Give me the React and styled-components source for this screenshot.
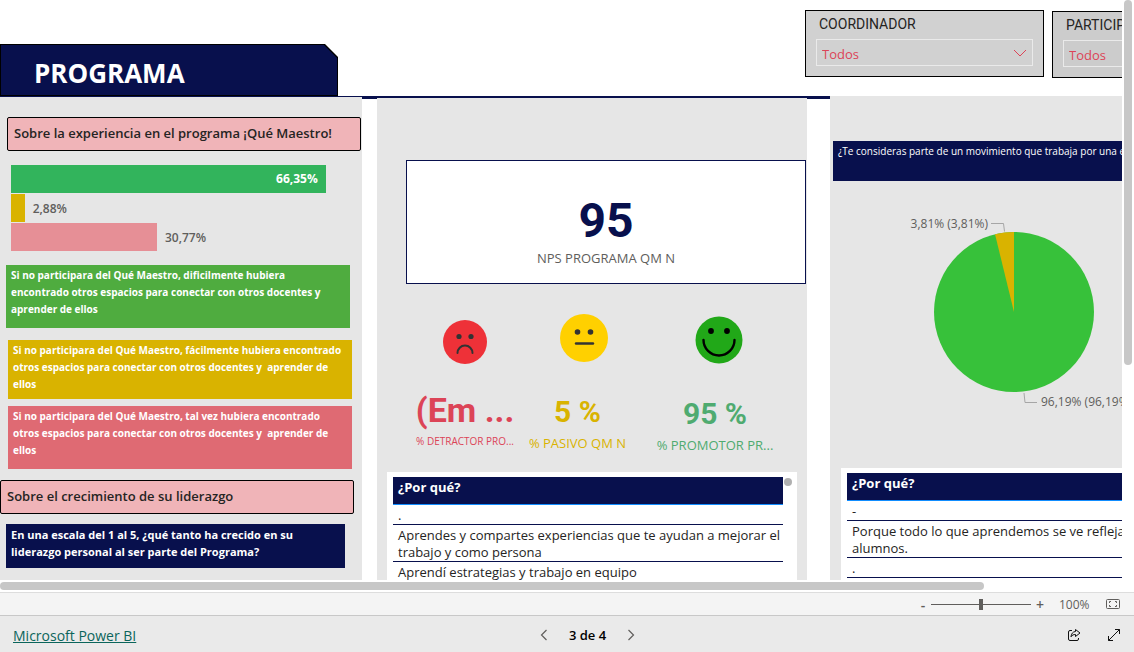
import React from "react";
import styled, { createGlobalStyle } from "styled-components";

const navy = "#08104d";
const gold = "#d9b300";
const ui = `"Open Sans", "Noto Sans", sans-serif`;
const din = `Roboto, "Liberation Sans", sans-serif`;

const Global = createGlobalStyle`
  *, *::before, *::after { box-sizing: border-box; }
  body { margin: 0; background: #fff; color: #252423; font-family: ${ui}; font-size: 12px; }
  button, select, input { font: inherit; color: inherit; margin: 0; }
  h1, h2, p { margin: 0; }
`;

const Page = styled.div`
  display: flex;
  flex-direction: column;
  height: 100vh;
`;

const Viewer = styled.div`
  flex: 1;
  min-height: 0;
  display: grid;
  grid-template-columns: minmax(0, 1fr) 12px;
  grid-template-rows: minmax(0, 1fr) 12px;
`;

const Report = styled.main`
  display: flex;
  flex-direction: column;
  overflow: hidden;
`;

const ScrollLane = styled.div`
  padding: ${(p) => (p.$vertical ? "0 2px" : "2px 0")};
`;

const Thumb = styled.div`
  background: #c7c7c7;
  border-radius: 4px;
  height: ${(p) => (p.$vertical ? "63%" : "8px")};
  width: ${(p) => (p.$vertical ? "8px" : "87.7%")};
`;

const Header = styled.header`
  display: grid;
  grid-template-columns: minmax(0, 338fr) minmax(0, 467fr) minmax(0, 317fr);
  flex: none;
  height: 96px;
`;

const Banner = styled.div`
  grid-column: 1;
  align-self: end;
  height: 52px;
  padding: 1px;
  background: #000;
  clip-path: polygon(0 0, calc(100% - 13px) 0, 100% 13px, 100% 100%, 0 100%);
`;

const BannerFill = styled.div`
  height: 100%;
  display: flex;
  align-items: center;
  padding: 6px 0 0 33px;
  background: ${navy};
  clip-path: polygon(0 0, calc(100% - 13px) 0, 100% 13px, 100% 100%, 0 100%);
`;

const Title = styled.h1`
  font-size: 26px;
  line-height: 32px;
  font-weight: 700;
  color: #fff;
`;

const Slicers = styled.div`
  grid-column: 3;
  display: flex;
  gap: 8px;
  padding-top: 10px;
  overflow: hidden;
`;

const Slicer = styled.div`
  flex: none;
  width: 239px;
  height: 67px;
  margin-top: ${(p) => (p.$lowered ? "1px" : "0")};
  padding: 4px 10px;
  border: 1px solid #000;
  background: ${(p) => (p.$lowered ? "#cccccc" : "#d1d1d1")};
`;

const SlicerLabel = styled.label`
  display: block;
  padding-left: 3px;
  font-family: ${din};
  font-size: 14px;
  line-height: 18px;
  margin-bottom: 6px;
`;

const SelectWrap = styled.div`
  position: relative;
  color: #dc4457;
  svg { position: absolute; right: 6px; top: 10px; pointer-events: none; }
`;

const Select = styled.select`
  appearance: none;
  display: block;
  width: 100%;
  height: 27px;
  padding: 2px 5px 0;
  border: 1px solid #eaeaea;
  border-radius: 0;
  background: transparent;
  font-size: 13px;
`;

const Columns = styled.div`
  flex: 1;
  min-height: 0;
  display: grid;
  grid-template-columns: minmax(0, 362fr) minmax(0, 430fr) minmax(0, 300fr);
  grid-template-rows: minmax(0, 1fr);
  column-gap: 15px;
  background: linear-gradient(${navy} 3px, #fff 3px);
`;

const Panel = styled.section`
  background: #e6e6e6;
  overflow: hidden;
  margin-top: ${(p) => p.$drop || 0}px;
  margin-left: ${(p) => p.$inset || 0}px;
  padding-top: ${(p) => p.$space || 0}px;
`;

const SectionTitle = styled.h2`
  width: 354px;
  max-width: 100%;
  height: 34px;
  margin-left: ${(p) => p.$indent || 0}px;
  padding-left: 6px;
  border: 1px solid #000;
  border-radius: 2px;
  background: #f0b4b8;
  font-size: 13px;
  line-height: 31px;
  font-weight: 600;
  white-space: nowrap;
`;

const Bars = styled.div`
  display: flex;
  flex-direction: column;
  gap: 1px;
  margin: 14px 0 14px 11px;
`;

const BarRow = styled.div`
  display: flex;
  align-items: center;
  height: 28px;
  gap: 8px;
  font-weight: 600;
  color: #605e5c;
`;

const Bar = styled.div`
  height: 100%;
  background: ${(p) => p.$color};
  color: #fff;
  font-weight: 700;
  line-height: 28px;
  text-align: right;
  padding-right: ${(p) => (p.$labelled ? "8px" : "0")};
`;

const Note = styled.p`
  width: ${(p) => p.$width || 344}px;
  height: ${(p) => p.$height}px;
  margin: ${(p) => p.$margin};
  padding: 2px 5px 0;
  background: ${(p) => p.$color};
  color: #fff;
  font-size: ${(p) => (p.$large ? "11px" : "10px")};
  line-height: 17px;
  font-weight: 700;
  white-space: pre;
`;

const ScoreCard = styled.div`
  height: 124px;
  margin: 62px 1px 0 29px;
  padding-top: 34px;
  border: 1px solid ${navy};
  background: #fff;
  text-align: center;
`;

const Score = styled.div`
  font-family: ${din};
  font-weight: 700;
  font-size: 48px;
  line-height: 52px;
  color: ${navy};
`;

const Caption = styled.div`
  font-size: ${(p) => (p.$small ? "10px" : "13px")};
  line-height: 22px;
  color: ${(p) => p.$color || "#605e5c"};
  white-space: nowrap;
`;

const Faces = styled.div`
  display: grid;
  grid-template-columns: 120fr 118fr 151fr;
  height: 52px;
  margin: 28px 13px 0 28px;
  align-items: center;
  justify-items: center;
`;

const Kpis = styled.div`
  display: grid;
  grid-template-columns: 120fr 105fr 170fr;
  height: 86px;
  margin: 22px 7px 0 28px;
  text-align: center;
`;

const Kpi = styled.div`
  padding-top: ${(p) => p.$top}px;
  color: ${(p) => p.$color};
`;

const KpiValue = styled.div`
  font-family: ${din};
  font-weight: 700;
  font-size: ${(p) => (p.$large ? "34px" : "30px")};
  line-height: 40px;
  white-space: nowrap;
`;

const TableCard = styled.div`
  height: 200px;
  display: flex;
  align-items: flex-start;
  gap: 1px;
  margin-left: ${(p) => p.$left}px;
  margin-right: ${(p) => p.$right}px;
  padding: 5px 5px 0 6px;
  background: #fff;
`;

const Table = styled.table`
  flex: 1;
  border-collapse: separate;
  border-spacing: 0;
  font-size: 13px;
  line-height: 17px;
`;

const HeadCell = styled.th`
  height: 28px;
  padding: 2px 5px 0;
  background: ${navy};
  border-bottom: 1px solid #118dff;
  color: #fff;
  text-align: left;
  vertical-align: top;
  font-weight: 700;
`;

const Cell = styled.td`
  padding: 2px 0 0 5px;
  border-bottom: 1px solid ${navy};
  white-space: pre;
`;

const TableDot = styled.div`
  flex: none;
  width: 8px;
  height: 8px;
  margin-top: 1px;
  border-radius: 4px;
  background: #b0b0b0;
`;

const Question = styled.p`
  height: 40px;
  margin: 45px 0 0 3px;
  padding: 1px 5px;
  background: ${navy};
  color: #fff;
  font-size: 10px;
  line-height: 18px;
  white-space: nowrap;
  overflow: hidden;
`;

const Pie = styled.svg`
  display: block;
  font-family: ${ui};
  font-size: 12px;
  fill: #605e5c;
`;

const ZoomBar = styled.div`
  flex: none;
  display: flex;
  align-items: center;
  justify-content: flex-end;
  height: 24px;
  padding-right: 13px;
  border-top: 1px solid #dddddd;
  border-bottom: 1px solid #c8c8c8;
  background: #f4f4f4;
  color: #605e5c;
`;

const IconButton = styled.button`
  display: flex;
  align-items: center;
  justify-content: center;
  width: ${(p) => p.$width || 16}px;
  height: 20px;
  padding: 0;
  border: 0;
  background: none;
  font-size: 14px;
  font-weight: 600;
  color: ${(p) => p.$color || "#605e5c"};
`;

const ZoomRange = styled.input`
  appearance: none;
  width: 100px;
  height: 12px;
  background: linear-gradient(#605e5c, #605e5c) center / 100% 1px no-repeat;
  &::-webkit-slider-thumb {
    appearance: none;
    width: 4px;
    height: 11px;
    background: #605e5c;
  }
`;

const ZoomValue = styled.span`
  width: 28px;
  margin: 0 18px 0 10px;
  font-size: 12px;
`;

const Footer = styled.footer`
  flex: none;
  display: grid;
  grid-template-columns: 1fr auto 1fr;
  align-items: center;
  height: 36px;
  padding: 2px 12px 0 13px;
  background: #eaeaea;
`;

const BrandLink = styled.a`
  justify-self: start;
  font-size: 14px;
  color: #0b655b;
`;

const Pager = styled.nav`
  display: flex;
  align-items: center;
  gap: 17px;
  margin-left: 40px;
  font-size: 13px;
  font-weight: 600;
  color: #000;
`;

const Actions = styled.div`
  display: flex;
  justify-content: flex-end;
  gap: 24px;
`;

function Field({ id, label, lowered }) {
  return (
    <Slicer $lowered={lowered}>
      <SlicerLabel htmlFor={id}>{label}</SlicerLabel>
      <SelectWrap>
        <Select id={id}>
          <option>Todos</option>
        </Select>
        <svg width="14" height="9" viewBox="0 0 14 9" fill="none" stroke="currentColor">
          <path d="M1 1l6 6 6-6" />
        </svg>
      </SelectWrap>
    </Slicer>
  );
}

const ratios = [
  { value: 66.35, label: "66,35%", color: "#32b45c", inside: true },
  { value: 2.88, label: "2,88%", color: gold },
  { value: 30.77, label: "30,77%", color: "#e68f96" },
];

function Ratios() {
  return (
    <Bars>
      {ratios.map((r) => (
        <BarRow key={r.label}>
          <Bar $color={r.color} $labelled={r.inside} style={{ width: `${(r.value / 74) * 100}%` }}>
            {r.inside && r.label}
          </Bar>
          {!r.inside && r.label}
        </BarRow>
      ))}
    </Bars>
  );
}

function Reasons({ rows, left, right, dot }) {
  return (
    <TableCard $left={left} $right={right}>
      <Table>
        <thead>
          <tr><HeadCell scope="col">¿Por qué?</HeadCell></tr>
        </thead>
        <tbody>
          {rows.map((row) => (
            <tr key={row}><Cell>{row}</Cell></tr>
          ))}
        </tbody>
      </Table>
      {dot && <TableDot />}
    </TableCard>
  );
}

export default function App() {
  return (
    <Page>
      <Global />
      <Viewer>
        <Report>
          <Header>
            <Banner><BannerFill><Title>PROGRAMA</Title></BannerFill></Banner>
            <Slicers>
              <Field id="coordinador" label="COORDINADOR" />
              <Field id="participante" label="PARTICIPANTE" lowered />
            </Slicers>
          </Header>
          <Columns>
            <Panel $drop={1} $space={20}>
              <SectionTitle $indent={7}>Sobre la experiencia en el programa ¡Qué Maestro!</SectionTitle>
              <Ratios />
              <Note $color="#4fac3f" $height={63} $margin="0 0 12px 6px">
                {"Si no participara del Qué Maestro, dificilmente hubiera\nencontrado otros espacios para conectar con otros docentes y\naprender de ellos"}
              </Note>
              <Note $color={gold} $height={59} $margin="0 0 7px 8px">
                {"Si no participara del Qué Maestro, fácilmente hubiera encontrado\notros espacios para conectar con otros docentes y  aprender de\nellos"}
              </Note>
              <Note $color="#df6a73" $height={63} $margin="0 0 11px 8px">
                {"Si no participara del Qué Maestro, tal vez hubiera encontrado\notros espacios para conectar con otros docentes y  aprender de\nellos"}
              </Note>
              <SectionTitle>Sobre el crecimiento de su liderazgo</SectionTitle>
              <Note $large $color={navy} $width={339} $height={44} $margin="10px 0 0 6px">
                {"En una escala del 1 al 5, ¿qué tanto ha crecido en su\nliderazgo personal al ser parte del Programa?"}
              </Note>
            </Panel>

            <Panel $drop={2}>
              <ScoreCard>
                <Score>95</Score>
                <Caption>NPS PROGRAMA QM N</Caption>
              </ScoreCard>
              <Faces>
                <svg width="44" height="52" viewBox="0 0 44 52">
                  <circle cx="22" cy="30" r="22" fill="#ee3138" />
                  <circle cx="16" cy="24.500" r="2.600" fill="#333" />
                  <circle cx="28" cy="24.500" r="2.600" fill="#333" />
                  <path d="M14.500 41a7.500 7.500 0 0 1 15 0" fill="none" stroke="#333" strokeWidth="2" strokeLinecap="round" />
                </svg>
                <svg width="48" height="52" viewBox="0 0 48 52">
                  <circle cx="24" cy="26" r="24" fill="#ffd000" />
                  <circle cx="17.500" cy="20" r="2.800" fill="#333" />
                  <circle cx="30.500" cy="20" r="2.800" fill="#333" />
                  <path d="M16 31.500h17" stroke="#333" strokeWidth="2.400" strokeLinecap="round" />
                </svg>
                <svg width="48" height="52" viewBox="0 0 48 52">
                  <circle cx="24" cy="28" r="23.500" fill="#21a818" />
                  <circle cx="16" cy="19" r="2.900" fill="#000" />
                  <circle cx="32" cy="19" r="2.900" fill="#000" />
                  <path d="M8.500 28a15.500 15.500 0 0 0 31 0" fill="none" stroke="#000" strokeWidth="2.400" strokeLinecap="round" />
                </svg>
              </Faces>
              <Kpis>
                <Kpi $color="#dc4457" $top={4}>
                  <KpiValue $large>(Em ...</KpiValue>
                  <Caption $small $color="inherit">% DETRACTOR PRO...</Caption>
                </Kpi>
                <Kpi $color={gold} $top={6}>
                  <KpiValue>5 %</KpiValue>
                  <Caption $color="inherit">% PASIVO QM N</Caption>
                </Kpi>
                <Kpi $color="#4fab70" $top={8}>
                  <KpiValue>95 %</KpiValue>
                  <Caption $color="inherit">% PROMOTOR PR...</Caption>
                </Kpi>
              </Kpis>
              <Reasons
                left={10}
                right={10}
                dot
                rows={[
                  ".",
                  "Aprendes y compartes experiencias que te ayudan a mejorar el\ntrabajo y como persona",
                  "Aprendí estrategias y trabajo en equipo",
                ]}
              />
            </Panel>

            <Panel $inset={8}>
              <Question>¿Te consideras parte de un movimiento que trabaja por una educación</Question>
              <Pie width="292" height="287" viewBox="0 0 292 287">
                <circle cx="184" cy="131" r="80" fill="#37c13a" />
                <path d="M184 131V51a80 80 0 0 0-18.970 2.280z" fill={gold} />
                <path d="M161 42.500h12.500l1 8M194 212l1 9.500h12" fill="none" stroke="#a6a6a6" />
                <text x="158" y="47" textAnchor="end">3,81% (3,81%)</text>
                <text x="211" y="225">96,19% (96,19%)</text>
              </Pie>
              <Reasons
                left={11}
                right={-100}
                rows={["-", "Porque todo lo que aprendemos se ve reflejado en los\nalumnos.", "."]}
              />
            </Panel>
          </Columns>
        </Report>
        <ScrollLane $vertical><Thumb $vertical /></ScrollLane>
        <ScrollLane><Thumb /></ScrollLane>
      </Viewer>

      <ZoomBar>
        <IconButton aria-label="Alejar">-</IconButton>
        <ZoomRange type="range" aria-label="Zoom" min="0" max="200" defaultValue="100" />
        <IconButton aria-label="Acercar" $width={18}>+</IconButton>
        <ZoomValue>100%</ZoomValue>
        <IconButton aria-label="Ajustar a la página">
          <svg width="16" height="12" viewBox="0 0 16 12" fill="none" stroke="currentColor">
            <rect x="1.500" y="1.500" width="13" height="9" rx="1" />
            <path d="M4.500 5V3.500h1.500M10 3.500h1.500V5M11.500 7v1.500h-1.500M6 8.500H4.500V7" />
          </svg>
        </IconButton>
      </ZoomBar>

      <Footer>
        <BrandLink href="#powerbi">Microsoft Power BI</BrandLink>
        <Pager aria-label="Páginas">
          <IconButton aria-label="Anterior">
            <svg width="8" height="12" viewBox="0 0 8 12" fill="none" stroke="currentColor" strokeWidth="1.200">
              <path d="M6.500 1l-5 5 5 5" />
            </svg>
          </IconButton>
          <span>3 de 4</span>
          <IconButton aria-label="Siguiente">
            <svg width="8" height="12" viewBox="0 0 8 12" fill="none" stroke="currentColor" strokeWidth="1.200">
              <path d="M1.500 1l5 5-5 5" />
            </svg>
          </IconButton>
        </Pager>
        <Actions>
          <IconButton aria-label="Compartir" $color="#111">
            <svg width="14" height="14" viewBox="0 0 14 14" fill="none" stroke="currentColor" strokeLinejoin="round">
              <path d="M5 2.500H3A1.500 1.500 0 0 0 1.500 4v7A1.500 1.500 0 0 0 3 12.500h7a1.500 1.500 0 0 0 1.500-1.500v-1" />
              <path d="M8.500 1.500L13 5 8.500 8.500v-2C6.500 6.500 5.200 7 4 8.800 4.200 5.800 5.800 3.700 8.500 3.500z" />
            </svg>
          </IconButton>
          <IconButton aria-label="Pantalla completa" $color="#111">
            <svg width="14" height="14" viewBox="0 0 14 14" fill="none" stroke="currentColor">
              <path d="M1.500 12.500l11-11M8 1.500h4.500V6M1.500 8v4.500H6" />
            </svg>
          </IconButton>
        </Actions>
      </Footer>
    </Page>
  );
}
